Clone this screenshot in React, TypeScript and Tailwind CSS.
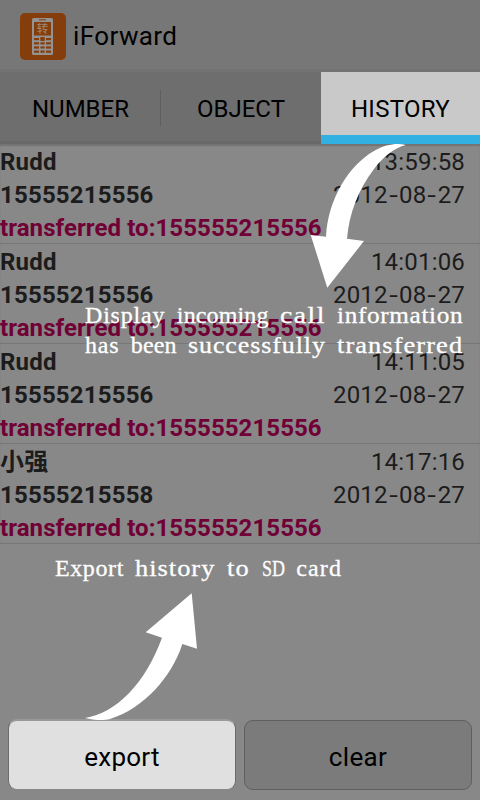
import React from "react";

type Call = { name: string; number: string; time: string };

const calls: Call[] = [
  { name: "Rudd", number: "15555215556", time: "13:59:58" },
  { name: "Rudd", number: "15555215556", time: "14:01:06" },
  { name: "Rudd", number: "15555215556", time: "14:11:05" },
  { name: "小强", number: "15555215558", time: "14:17:16" },
];

function AppIcon() {
  return (
    <svg viewBox="0 0 46 47" className="h-[47px] w-[46px]">
      <rect width="46" height="47" rx="5" fill="#863d0c" />
      <rect x="12" y="5" width="21" height="37" rx="1.5" fill="#929292" />
      <rect x="19" y="6.3" width="7" height="1" fill="#863d0c" />
      <rect x="14" y="9" width="17" height="13.5" fill="#863d0c" />
      <text x="22.5" y="20.2" textAnchor="middle" fontSize="11.5" fill="#a08a7c" fontFamily="Noto Sans CJK SC, sans-serif">转</text>
      {[0, 1, 2, 3].map((r) => (
        <g key={r} fill="#863d0c">
          <rect x="14" y={25 + r * 4.2} width="5" height="2.2" />
          <rect x="20.3" y={r === 0 ? 24 : 25 + r * 4.2} width="4.5" height={r === 0 ? 4 : 2.2} rx="0.8" />
          <rect x="26" y={25 + r * 4.2} width="5" height="2.2" />
        </g>
      ))}
    </svg>
  );
}

function Dash() {
  return <span className="inline-block w-[11.3px] scale-x-[1.3] text-center">-</span>;
}

function Hint({ words, className }: { words: [string, string][]; className: string }) {
  return (
    <p className={`absolute flex gap-[11.48px] whitespace-nowrap font-['Liberation_Serif','Noto_Sans_CJK_SC',serif] text-[24px] leading-[30px] text-white [-webkit-text-stroke:0.3px_white] ${className}`}>
      {words.map(([word, style]) => (
        <span key={word} className={style}>{word}</span>
      ))}
    </p>
  );
}

export default function App() {
  return (
    <div className="relative flex h-[800px] w-[480px] flex-col overflow-hidden bg-[#888] font-['Roboto','Noto_Sans_CJK_SC',sans-serif] text-[24px] text-black">
      <header className="flex h-[72px] items-center border-b-[3px] border-[#727272] bg-[#777] pl-5 pt-[3px]">
        <AppIcon />
        <h1 className="ml-[7px] pt-px text-[26px] tracking-[0.4px]">iForward</h1>
      </header>
      <nav className="flex h-[72px] shrink-0 bg-[#6e6e6e]">
        <div className="flex w-[160px] items-center justify-center border-b-[3px] border-[#686868] pl-px pt-[4px]">NUMBER</div>
        <div className="flex w-px items-center border-b-[3px] border-[#686868] pt-[3px]">
          <div className="h-[36px] w-px bg-[#5f5f5f]" />
        </div>
        <div className="flex w-[160px] items-center justify-center border-b-[3px] border-[#686868] pt-[4px]">OBJECT</div>
        <div className="flex flex-1 items-center justify-center border-b-[9px] border-[#33b0e2] bg-[#c9c9c9] pt-[10px] tracking-[0.3px]">HISTORY</div>
      </nav>
      <ul className="text-[#1c1c1c] shadow-[inset_0_2px_1px_#747474]">
        {calls.map((call, i) => (
          <li key={i} className="h-[100px] border-b border-[#777] pt-[2px] leading-[33px] tracking-[0.19px]">
            <div className="flex h-[33px] justify-between pr-[15px]">
              <b>{call.name}</b>
              <span>{call.time}</span>
            </div>
            <div className="flex h-[33px] justify-between pr-[15px]">
              <b>{call.number}</b>
              <span>2012<Dash />08<Dash />27</span>
            </div>
            <b className="block h-[33px] tracking-[0.08px] text-[#700036]">transferred to:155555215556</b>
          </li>
        ))}
      </ul>
      <footer className="mt-auto flex gap-[8px] px-[8px] pb-[10px] text-[26px]">
        <button className="h-[71px] w-[228px] rounded-[9px] border border-t-2 border-t-[#979a9a] border-x-[#6a6d6d] border-b-[#858989] bg-[#e0e0e0] pt-[4px] tracking-[0.2px]">export</button>
        <button className="mt-px h-[70px] w-[228px] rounded-[9px] border border-[#5d605f] bg-[#7b7b7b] pt-[4px] tracking-[0.4px]">clear</button>
      </footer>
      <svg viewBox="0 0 480 800" className="pointer-events-none absolute inset-0 h-[800px] w-[480px] fill-white">
        <path d="M406 145C397 143 386 144 374 151C349 165 328 199 326 236.7L310.7 235L327.3 287.7L364 241L347 238.7C349 214 358 190 374 169C384 156 394 148 406 145Z" />
        <path d="M85 718C116 713 145 684 162 637.7L145.7 632.3L191.7 593.3L197 648.7L182.3 644C172 677 143 709 110 719C103 721 93 720 85 718Z" />
      </svg>
      <Hint
        className="left-[85px] top-[300px]"
        words={[
          ["Display", "w-[80.4px] tracking-[0.81px]"],
          ["incoming", "w-[91.8px] tracking-[0.14px]"],
          ["call", "w-[45.9px] origin-left scale-x-[1.15] tracking-[1.3px]"],
          ["information", "w-[126.3px] origin-left scale-x-[1.05] tracking-[0.63px]"],
        ]}
      />
      <Hint
        className="left-[85px] top-[330px]"
        words={[
          ["has", "w-[34.4px] tracking-[0.8px]"],
          ["been", "w-[45.9px] tracking-[0.15px]"],
          ["successfully", "w-[137.8px] origin-left scale-x-[1.08] tracking-[0.86px]"],
          ["transferred", "w-[126.3px] origin-left scale-x-[1.1] tracking-[0.98px]"],
        ]}
      />
      <Hint
        className="left-[55px] top-[553px]"
        words={[
          ["Export", "w-[68.9px] tracking-[0.6px]"],
          ["history", "w-[80.4px] origin-left scale-x-[1.1] tracking-[0.91px]"],
          ["to", "w-[23px] origin-left scale-x-[1.1] tracking-[1.1px]"],
          ["SD", "w-[23px] origin-left scale-x-[0.75]"],
          ["card", "w-[45.9px] tracking-[1.15px]"],
        ]}
      />
    </div>
  );
}
